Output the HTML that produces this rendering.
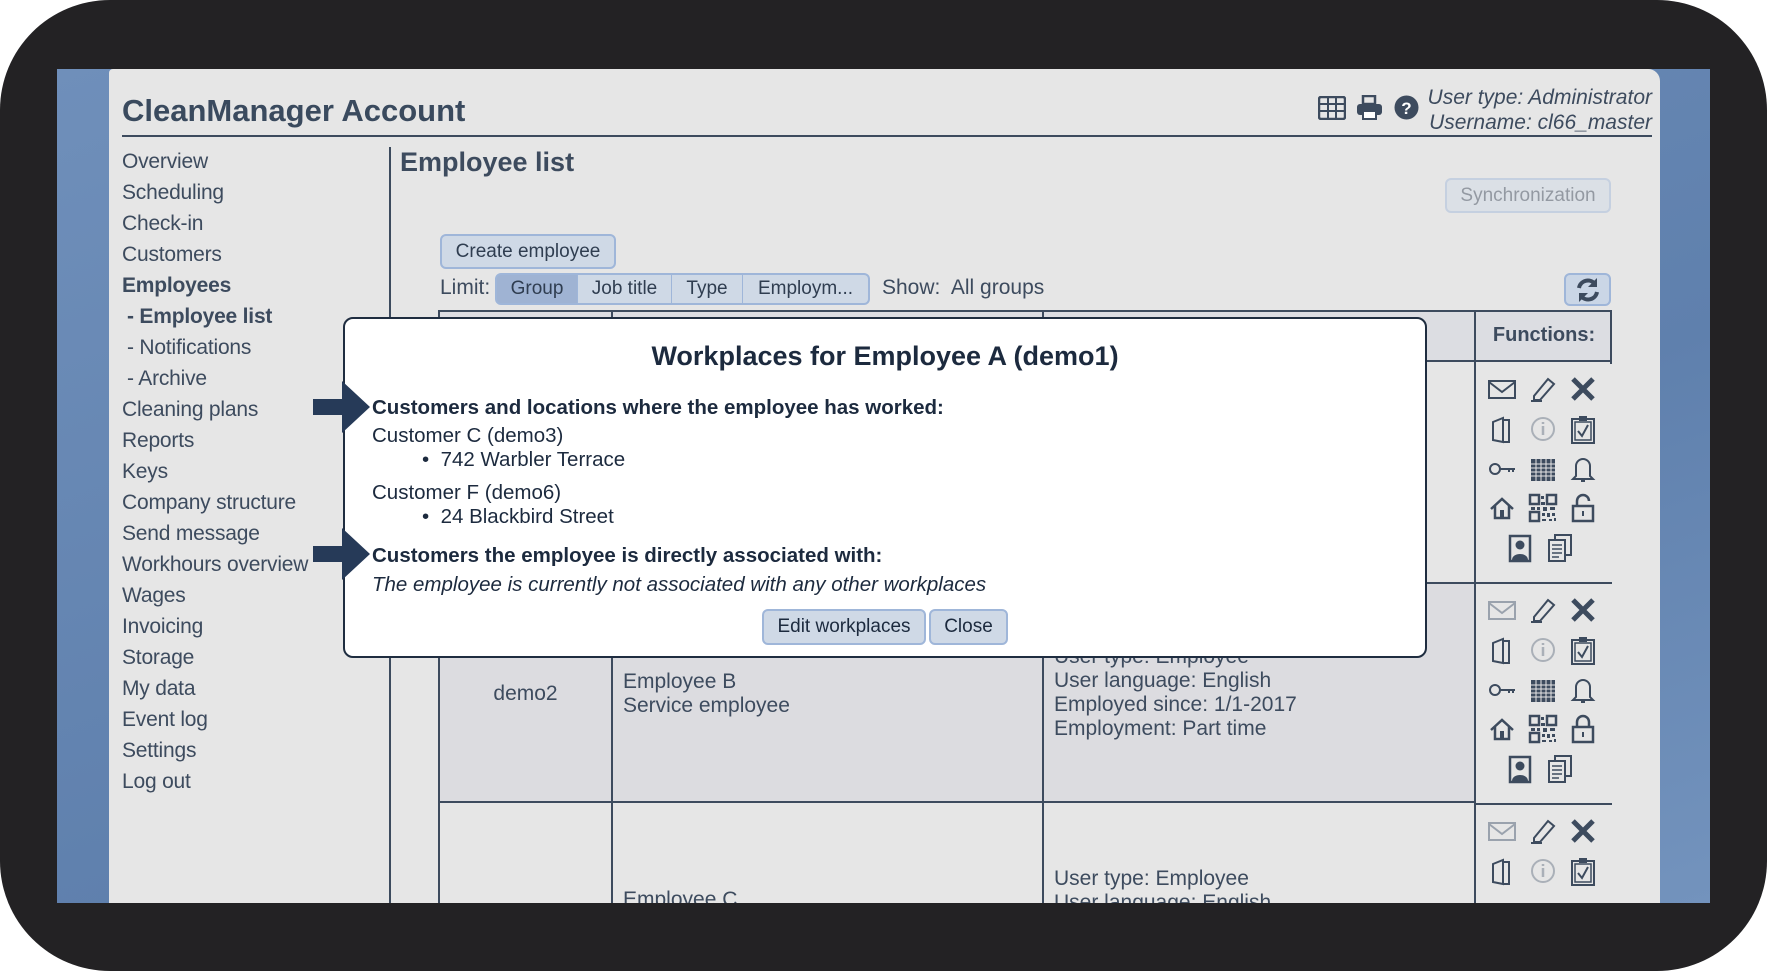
<!DOCTYPE html>
<html><head><meta charset="utf-8"><style>
*{box-sizing:border-box;margin:0;padding:0}
body{width:1767px;height:971px;overflow:hidden;background:#fff;font-family:"Liberation Sans",sans-serif;color:#3d4b5e;position:relative}
.frame{position:absolute;left:0;top:0;width:1767px;height:971px;background:#232224;border-radius:110px}
.blue{position:absolute;left:57px;top:69px;width:1653px;height:834px;background:linear-gradient(160deg,#6f8fba,#5f80ad 60%,#7393bd)}
.panel{position:absolute;left:109px;top:69px;width:1551px;height:834px;background:#e6e6e6;border-top-right-radius:12px;border-top-left-radius:4px;overflow:hidden}
.a{position:absolute;white-space:nowrap}
.side div{position:absolute;left:13px;font-size:21px;height:31px;line-height:31px;letter-spacing:-0.2px}
.btn{position:absolute;border:2px solid #9fb6d9;background:#cfd9e6;border-radius:6px;font-size:19px;color:#2f3d50;text-align:center}
.seg{position:absolute;top:204px;height:32px;font-size:19px;line-height:28px;text-align:center;background:#cfd9e6;border-top:2px solid #9fb6d9;border-bottom:2px solid #9fb6d9;border-right:1px solid #9fb6d9;color:#2f3d50}
.vl{position:absolute;width:2px;background:#3d4b5e}
.hl{position:absolute;height:2px;background:#3d4b5e}
.t{font-size:21px;line-height:24px}
svg.i{position:absolute;width:30px;height:30px}
.m{font-size:20.5px}
</style></head><body>
<div class="frame"></div>
<div class="blue"></div>
<div class="panel">
  <div class="a" style="left:13px;top:24px;font-size:31px;font-weight:bold;color:#3a4a5e">CleanManager Account</div>
  <div class="hl" style="left:13px;top:66px;width:1530px;height:2px"></div>
  <svg class="i" style="left:1209px;top:27px;width:28px;height:24px" viewBox="0 0 28 24"><rect x="1" y="1" width="26" height="22" rx="2" fill="none" stroke="#3d4b5e" stroke-width="2.5"/><path d="M1 8H27M1 15H27M10 1V23M18 1V23" stroke="#3d4b5e" stroke-width="2"/></svg>
  <svg class="i" style="left:1247px;top:26px;width:27px;height:25px" viewBox="0 0 27 25"><rect x="7" y="1" width="12" height="8" fill="none" stroke="#3d4b5e" stroke-width="2.5"/><rect x="1" y="9" width="25" height="11" rx="3" fill="#3d4b5e"/><rect x="7" y="16" width="13" height="8" fill="#fff" stroke="#3d4b5e" stroke-width="2"/></svg>
  <svg class="i" style="left:1285px;top:26px;width:25px;height:25px" viewBox="0 0 25 25"><circle cx="12.5" cy="12.5" r="12" fill="#3d4b5e"/><text x="12.5" y="19" font-size="17" font-weight="bold" fill="#fff" text-anchor="middle" font-family="Liberation Sans">?</text></svg>
  <div class="a" style="right:8px;top:16px;font-size:21px;font-style:italic;text-align:right;line-height:25px">User type: Administrator<br>Username: cl66_master</div>
  <div class="side">
    <div style="top:77px">Overview</div><div style="top:108px">Scheduling</div><div style="top:139px">Check-in</div><div style="top:170px">Customers</div>
    <div style="top:201px;font-weight:bold">Employees</div>
    <div style="top:232px;left:18px;font-weight:bold">- Employee list</div>
    <div style="top:263px;left:18px">- Notifications</div><div style="top:294px;left:18px">- Archive</div>
    <div style="top:325px">Cleaning plans</div><div style="top:356px">Reports</div><div style="top:387px">Keys</div><div style="top:418px">Company structure</div><div style="top:449px">Send message</div><div style="top:480px">Workhours overview</div><div style="top:511px">Wages</div><div style="top:542px">Invoicing</div><div style="top:573px">Storage</div><div style="top:604px">My data</div><div style="top:635px">Event log</div><div style="top:666px">Settings</div><div style="top:697px">Log out</div>
  </div>
  <div class="vl" style="left:280px;top:78px;height:760px"></div>
  <div class="a" style="left:291px;top:78px;font-size:27px;font-weight:bold">Employee list</div>
  <div class="btn" style="left:1336px;top:109px;width:166px;height:35px;line-height:31px;opacity:.45">Synchronization</div>
  <div class="btn" style="left:331px;top:165px;width:176px;height:35px;line-height:31px">Create employee</div>
  <div class="a" style="left:331px;top:207px;font-size:21px">Limit:</div>
  <div class="seg" style="left:386px;width:83px;background:#9fb3d3;border-left:2px solid #9fb6d9;border-radius:6px 0 0 6px">Group</div>
  <div class="seg" style="left:469px;width:94px">Job title</div>
  <div class="seg" style="left:563px;width:71px">Type</div>
  <div class="seg" style="left:634px;width:127px;border-right:2px solid #9fb6d9;border-radius:0 6px 6px 0">Employm...</div>
  <div class="a" style="left:773px;top:207px;font-size:21px">Show:&nbsp; All groups</div>
  <div class="btn" style="left:1455px;top:204px;width:47px;height:33px;background:#cad6e6"><svg width="26" height="26" viewBox="0 0 26 26" style="margin-top:2px"><path d="M4 11A9 9 0 0 1 20 7" fill="none" stroke="#3d4b5e" stroke-width="4"/><path d="M22 1V10H13Z" fill="#3d4b5e"/><path d="M22 15A9 9 0 0 1 6 19" fill="none" stroke="#3d4b5e" stroke-width="4"/><path d="M4 25V16H13Z" fill="#3d4b5e"/></svg></div>
  <div style="position:absolute;left:329px;top:241px;width:1174px;height:600px;border:2px solid #3d4b5e;border-bottom:none">
    <div style="position:absolute;left:0;top:0;right:0;height:50px;background:#dcdde2;border-bottom:2px solid #3d4b5e"></div>
    <div style="position:absolute;left:0;top:270px;right:0;height:221px;background:#dcdce0;border-top:2px solid #3d4b5e;border-bottom:2px solid #3d4b5e"></div>
    <div class="vl" style="left:171px;top:0;height:600px"></div>
    <div class="vl" style="left:602px;top:0;height:600px"></div>
    <div class="vl" style="left:1034px;top:0;height:600px"></div>
    <div style="position:absolute;left:1036px;top:52px;width:136px;bottom:0;background:#e6e6e6"></div>
    <div class="hl" style="left:1036px;top:270px;width:136px"></div>
    <div class="hl" style="left:1036px;top:491px;width:136px"></div>
    <div class="a" style="left:1036px;width:136px;top:12px;text-align:center;font-size:20px;font-weight:bold">Functions:</div>
    <div class="a t" style="left:0;width:171px;text-align:center;top:370px">demo2</div>
    <div class="a t" style="left:183px;top:358px">Employee B<br>Service employee</div>
    <div class="a t" style="left:614px;top:333px">User type: Employee<br>User language: English<br>Employed since: 1/1-2017<br>Employment: Part time</div>
    <div class="a t" style="left:614px;top:555px">User type: Employee<br>User language: English</div>
    <div class="a t" style="left:183px;top:576px">Employee C</div>
  </div>
</div>
<svg width="0" height="0" style="position:absolute">
<defs>
<symbol id="env" viewBox="0 0 30 30"><rect x="2" y="7" width="26" height="17" fill="none" stroke="currentColor" stroke-width="2"/><path d="M2 8L15 18L28 8" fill="none" stroke="currentColor" stroke-width="2"/></symbol>
<symbol id="pen" viewBox="0 0 30 30"><path d="M6 22L20 5L26 10L12 26H6Z" fill="none" stroke="currentColor" stroke-width="2"/><path d="M3 27H14" stroke="currentColor" stroke-width="2"/></symbol>
<symbol id="x" viewBox="0 0 30 30"><path d="M5 5L25 25M25 5L5 25" stroke="currentColor" stroke-width="5"/></symbol>
<symbol id="door" viewBox="0 0 30 30"><path d="M6 8L16 4V28L6 26Z M16 6H22V28H16" fill="none" stroke="currentColor" stroke-width="2"/></symbol>
<symbol id="info" viewBox="0 0 30 30"><circle cx="15" cy="15" r="11" fill="none" stroke="#aab0b8" stroke-width="2"/><path d="M15 12V21M15 8V10" stroke="#aab0b8" stroke-width="2.5"/></symbol>
<symbol id="clip" viewBox="0 0 30 30"><rect x="4" y="5" width="22" height="24" fill="none" stroke="currentColor" stroke-width="2"/><rect x="7" y="8" width="16" height="18" fill="none" stroke="currentColor" stroke-width="1.5"/><rect x="11" y="2" width="8" height="5" fill="currentColor"/><path d="M10 17L14 22L20 11" fill="none" stroke="currentColor" stroke-width="2"/></symbol>
<symbol id="key" viewBox="0 0 30 30"><circle cx="8" cy="15" r="5" fill="none" stroke="currentColor" stroke-width="2"/><path d="M13 15H28M22 15V18M26 15V18" stroke="currentColor" stroke-width="2"/></symbol>
<symbol id="cal" viewBox="0 0 30 30"><rect x="3" y="5" width="24" height="22" fill="currentColor"/><path d="M3 10H27M3 14H27M3 18H27M3 22H27M8 5V27M13 5V27M18 5V27M23 5V27" stroke="#e6e6e6" stroke-width="1"/></symbol>
<symbol id="bell" viewBox="0 0 30 30"><path d="M8 22V12A7 7 0 0 1 22 12V22L25 25H5Z" fill="none" stroke="currentColor" stroke-width="2"/><path d="M13 27H17" stroke="currentColor" stroke-width="2"/></symbol>
<symbol id="house" viewBox="0 0 30 30"><path d="M4 16L15 6L26 16M8 13V25H22V13" fill="none" stroke="currentColor" stroke-width="2.5"/><rect x="13" y="17" width="4" height="8" fill="currentColor"/></symbol>
<symbol id="qr" viewBox="0 0 30 30"><rect x="2" y="2" width="9" height="9" fill="none" stroke="currentColor" stroke-width="2.5"/><rect x="19" y="2" width="9" height="9" fill="none" stroke="currentColor" stroke-width="2.5"/><rect x="2" y="19" width="9" height="9" fill="none" stroke="currentColor" stroke-width="2.5"/><path d="M13 3h3v3h-3zM13 9h4v3h-4zM3 14h4v3H3zM9 14h3v3H9zM15 14h4v4h-4zM22 14h5v3h-5zM14 20h3v3h-3zM19 20h3v4h-3zM24 20h3v3h-3zM14 26h4v2h-4zM21 26h3v2h-3zM26 25h2v3h-2z" fill="currentColor"/></symbol>
<symbol id="lock" viewBox="0 0 30 30"><rect x="5" y="13" width="20" height="15" fill="none" stroke="currentColor" stroke-width="2.5"/><path d="M9 13V8A6 6 0 0 1 21 8" fill="none" stroke="currentColor" stroke-width="2.5"/><rect x="14" y="18" width="2" height="5" fill="currentColor"/></symbol>
<symbol id="lockc" viewBox="0 0 30 30"><rect x="5" y="13" width="20" height="15" fill="none" stroke="currentColor" stroke-width="2.5"/><path d="M9 13V8A6 6 0 0 1 21 8V13" fill="none" stroke="currentColor" stroke-width="2.5"/><rect x="14" y="18" width="2" height="5" fill="currentColor"/></symbol>
<symbol id="person" viewBox="0 0 30 30"><rect x="5" y="3" width="20" height="25" fill="none" stroke="currentColor" stroke-width="2.5"/><circle cx="15" cy="12" r="4.5" fill="currentColor"/><path d="M7 27C7 19 23 19 23 27Z" fill="currentColor"/></symbol>
<symbol id="docs" viewBox="0 0 30 30"><rect x="10" y="2" width="16" height="20" fill="none" stroke="currentColor" stroke-width="2"/><rect x="4" y="7" width="16" height="21" fill="#e6e6e6" stroke="currentColor" stroke-width="2"/><path d="M7 12H17M7 16H17M7 20H17M7 24H14" stroke="currentColor" stroke-width="1.5"/></symbol>
</defs></svg>
<div style="color:#3d4b5e">
<svg class="i" style="left:1487px;top:374px"><use href="#env"/></svg><svg class="i" style="left:1528px;top:374px"><use href="#pen"/></svg><svg class="i" style="left:1568px;top:374px"><use href="#x"/></svg>
<svg class="i" style="left:1487px;top:414px"><use href="#door"/></svg><svg class="i" style="left:1528px;top:414px"><use href="#info"/></svg><svg class="i" style="left:1568px;top:414px"><use href="#clip"/></svg>
<svg class="i" style="left:1487px;top:454px"><use href="#key"/></svg><svg class="i" style="left:1528px;top:454px"><use href="#cal"/></svg><svg class="i" style="left:1568px;top:454px"><use href="#bell"/></svg>
<svg class="i" style="left:1487px;top:493px"><use href="#house"/></svg><svg class="i" style="left:1528px;top:493px"><use href="#qr"/></svg><svg class="i" style="left:1568px;top:493px"><use href="#lock"/></svg>
<svg class="i" style="left:1505px;top:533px"><use href="#person"/></svg><svg class="i" style="left:1545px;top:533px"><use href="#docs"/></svg>
<svg class="i" style="left:1487px;top:595px;color:#9aa2ad"><use href="#env"/></svg><svg class="i" style="left:1528px;top:595px"><use href="#pen"/></svg><svg class="i" style="left:1568px;top:595px"><use href="#x"/></svg>
<svg class="i" style="left:1487px;top:635px"><use href="#door"/></svg><svg class="i" style="left:1528px;top:635px"><use href="#info"/></svg><svg class="i" style="left:1568px;top:635px"><use href="#clip"/></svg>
<svg class="i" style="left:1487px;top:675px"><use href="#key"/></svg><svg class="i" style="left:1528px;top:675px"><use href="#cal"/></svg><svg class="i" style="left:1568px;top:675px"><use href="#bell"/></svg>
<svg class="i" style="left:1487px;top:714px"><use href="#house"/></svg><svg class="i" style="left:1528px;top:714px"><use href="#qr"/></svg><svg class="i" style="left:1568px;top:714px"><use href="#lockc"/></svg>
<svg class="i" style="left:1505px;top:754px"><use href="#person"/></svg><svg class="i" style="left:1545px;top:754px"><use href="#docs"/></svg>
<svg class="i" style="left:1487px;top:816px;color:#9aa2ad"><use href="#env"/></svg><svg class="i" style="left:1528px;top:816px"><use href="#pen"/></svg><svg class="i" style="left:1568px;top:816px"><use href="#x"/></svg>
<svg class="i" style="left:1487px;top:856px"><use href="#door"/></svg><svg class="i" style="left:1528px;top:856px"><use href="#info"/></svg><svg class="i" style="left:1568px;top:856px"><use href="#clip"/></svg>
</div>
<div style="position:absolute;left:57px;top:903px;width:1653px;height:10px;background:#232224"></div>
<div style="position:absolute;left:343px;top:317px;width:1084px;height:341px;background:#fff;border:2px solid #1f2d40;border-radius:10px;color:#1c2a3e">
  <div class="a" style="left:0;right:0;top:22px;text-align:center;font-size:27px;font-weight:bold">Workplaces for Employee A (demo1)</div>
  <div class="a m" style="left:27px;top:77px;font-weight:bold">Customers and locations where the employee has worked:</div>
  <div class="a m" style="left:27px;top:105px">Customer C (demo3)</div>
  <div class="a m" style="left:77px;top:129px">•&nbsp; 742 Warbler Terrace</div>
  <div class="a m" style="left:27px;top:162px">Customer F (demo6)</div>
  <div class="a m" style="left:77px;top:186px">•&nbsp; 24 Blackbird Street</div>
  <div class="a m" style="left:27px;top:225px;font-weight:bold">Customers the employee is directly associated with:</div>
  <div class="a m" style="left:27px;top:254px;font-style:italic">The employee is currently not associated with any other workplaces</div>
  <div class="btn" style="left:417px;top:290px;width:164px;height:36px;line-height:32px;color:#1c2a3e">Edit workplaces</div>
  <div class="btn" style="left:584px;top:290px;width:79px;height:36px;line-height:32px;color:#1c2a3e">Close</div>
</div>
<svg style="position:absolute;left:313px;top:381px" width="58" height="52" viewBox="0 0 58 52"><path d="M0 18H29V0L57 26L29 52V34H0Z" fill="#263a58"/></svg>
<svg style="position:absolute;left:313px;top:528px" width="58" height="52" viewBox="0 0 58 52"><path d="M0 18H29V0L57 26L29 52V34H0Z" fill="#263a58"/></svg>
</body></html>
